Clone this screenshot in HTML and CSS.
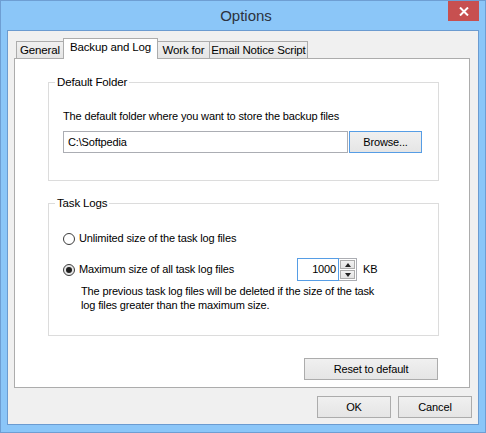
FILE: index.html
```html
<!DOCTYPE html>
<html lang="en">
<head>
  <meta charset="UTF-8" />
  <title>Options</title>
  <link rel="stylesheet" href="styles.css">
</head>
<body>
  <div class="window">
    <!-- Title bar -->
    <div class="titlebar">
      <span class="title">Options</span>
      <div class="close">
        <svg width="10" height="9" viewBox="0 0 10 9"><path d="M1 0.5 L9 8.5 M9 0.5 L1 8.5" stroke="#fff" stroke-width="2"/></svg>
      </div>
    </div>

    <div class="client">
      <!-- Tabs -->
      <div class="tabs">
        <div class="tab tab-general">General</div>
        <div class="tab tab-backup active">Backup and Log</div>
        <div class="tab tab-work">Work for</div>
        <div class="tab tab-email">Email Notice Script</div>
      </div>

      <div class="panel">
        <fieldset class="group group-folder">
          <legend>Default Folder</legend>
          <div class="group-body">
            <div class="line">The default folder where you want to store the backup files</div>
            <div class="folder-row">
              <div class="textbox">C:\Softpedia</div>
              <button class="btn btn-browse">Browse...</button>
            </div>
          </div>
        </fieldset>

        <fieldset class="group group-logs">
          <legend>Task Logs</legend>
          <div class="group-body">
            <div class="radio-row">
              <span class="radio"></span>
              <span class="radio-label">Unlimited size of the task log files</span>
            </div>
            <div class="radio-row radio-row-max">
              <span class="radio checked"></span>
              <span class="radio-label label-max">Maximum size of all task log files</span>
              <div class="spin">
                <div class="spin-value">1000</div>
                <div class="spin-buttons">
                  <div class="spin-btn"><span class="arrow-up"></span></div>
                  <div class="spin-btn"><span class="arrow-down"></span></div>
                </div>
              </div>
              <span class="unit">KB</span>
            </div>
            <div class="note">
              The previous task log files will be deleted if the size of the task<br>
              log files greater than the maximum size.
            </div>
          </div>
        </fieldset>

        <div class="panel-actions">
          <button class="btn btn-reset">Reset to default</button>
        </div>
      </div>

      <div class="dialog-actions">
        <button class="btn btn-dialog">OK</button>
        <button class="btn btn-dialog">Cancel</button>
      </div>
    </div>
  </div>
</body>
</html>
```
FILE: styles.css
```css
/* Window frame */
body {
  margin: 0;
  padding: 0;
  font-family: 'Liberation Sans', Arial, sans-serif;
  font-size: 11px;
  letter-spacing: -0.15px;
  color: #000;
}
.window {
  width: 486px;
  height: 433px;
  box-sizing: border-box;
  background: #8bc6f8;
  border: 1px solid #6e9ed3;
  padding: 0 6px 7px 6px;
  display: flex;
  flex-direction: column;
}
.titlebar {
  position: relative;
  height: 29px;
  flex: none;
  text-align: center;
}
.title {
  display: inline-block;
  margin-left: 6px;
  font-family: 'Liberation Sans', Arial, sans-serif;
  font-size: 15px;
  letter-spacing: 0;
  line-height: 29px;
  color: #2c3340;
}
.close {
  position: absolute;
  top: 0;
  right: 0;
  width: 31px;
  height: 20px;
  background: #c75050;
  display: flex;
  align-items: center;
  justify-content: center;
}

/* Client area */
.client {
  flex: 1;
  background: #f0f0f0;
  border: 1px solid #6b9bd0;
  padding: 7px 8px 0 6px;
  display: flex;
  flex-direction: column;
}
.tabs {
  display: flex;
  align-items: flex-end;
  height: 20px;
  margin-left: 2px;
}
.tab {
  box-sizing: border-box;
  height: 17px;
  border: 1px solid #acacac;
  border-bottom: none;
  background: linear-gradient(#f0f0f0, #e5e5e5);
  margin-right: -1px;
  line-height: 16px;
  text-align: center;
  font-size: 11.5px;
}
.tab.active {
  height: 21px;
  margin-bottom: -1px;
  background: #fff;
  position: relative;
  z-index: 1;
  line-height: 17px;
}
.tab-general { width: 48px; }
.tab-backup { width: 95px; }
.tab-work { width: 53px; }
.tab-email { width: 99px; }

.panel {
  height: 330px;
  box-sizing: border-box;
  border: 1px solid #acacac;
  background: #fff;
  padding: 16px 30px 0 33px;
}

/* Group boxes */
.group {
  margin: 0;
  padding: 0;
  border: 1px solid #dcdcdc;
  min-width: 0;
}
.group legend {
  margin-left: 6px;
  padding: 0 2px;
  line-height: 15px;
  font-size: 11.5px;
}
.group-body {
  padding: 19px 0 27px 14px;
}
.group-logs {
  margin-top: 15px;
}
.group-logs .group-body {
  padding: 20px 0 23px 14px;
}
.line {
  line-height: 15px;
  white-space: nowrap;
}
.folder-row {
  display: flex;
  margin-top: 7px;
}
.textbox {
  box-sizing: border-box;
  width: 285px;
  height: 22px;
  border: 1px solid #abadb3;
  background: #fff;
  padding: 0 4px;
  line-height: 20px;
}

/* Buttons */
.btn {
  box-sizing: border-box;
  height: 22px;
  padding: 0;
  border: 1px solid #acacac;
  background: linear-gradient(#f0f0f0, #e5e5e5);
  font-family: inherit;
  font-size: 11px;
  letter-spacing: -0.15px;
  color: #000;
}
.btn-browse {
  width: 73px;
  margin-left: 1px;
  border-color: #569de5;
}
.btn-reset {
  width: 134px;
}
.panel-actions {
  display: flex;
  justify-content: flex-end;
  margin: 22px 1px 0 0;
}
.dialog-actions {
  display: flex;
  justify-content: flex-end;
  gap: 7px;
  margin: 8px -2px 0 0;
}
.btn-dialog {
  width: 74px;
}

/* Radios */
.radio-row {
  display: flex;
  align-items: center;
  line-height: 15px;
  white-space: nowrap;
}
.radio {
  box-sizing: border-box;
  width: 12px;
  height: 12px;
  border: 1px solid #3c3c3c;
  border-radius: 50%;
  background: #fff;
  margin-right: 4px;
  display: flex;
  align-items: center;
  justify-content: center;
}
.radio.checked {
  background: #e6e6e6;
}
.radio.checked::after {
  content: "";
  width: 6px;
  height: 6px;
  border-radius: 50%;
  background: #1e1e1e;
}
.radio-row-max {
  margin-top: 12px;
  height: 23px;
}
.label-max {
  width: 218px;
}

/* Spin box */
.spin {
  display: flex;
  height: 23px;
}
.spin-value {
  box-sizing: border-box;
  width: 42px;
  height: 23px;
  border: 1px solid #569de5;
  background: #fff;
  text-align: right;
  padding-right: 2px;
  line-height: 21px;
}
.spin-buttons {
  display: flex;
  flex-direction: column;
  gap: 1px;
  padding: 1px;
  background: #fff;
  border: 1px solid #abadb3;
  border-left: none;
  box-sizing: border-box;
  width: 18px;
  height: 23px;
}
.spin-btn {
  flex: 1;
  border: 1px solid #acacac;
  background: linear-gradient(#f2f2f2, #e3e3e3);
  display: flex;
  align-items: center;
  justify-content: center;
}
.arrow-up {
  border-left: 3px solid transparent;
  border-right: 3px solid transparent;
  border-bottom: 4px solid #222;
}
.arrow-down {
  border-left: 3px solid transparent;
  border-right: 3px solid transparent;
  border-top: 4px solid #222;
}
.unit {
  margin-left: 6px;
}
.note {
  margin: 3px 0 0 18px;
  line-height: 14px;
  white-space: nowrap;
}
```
